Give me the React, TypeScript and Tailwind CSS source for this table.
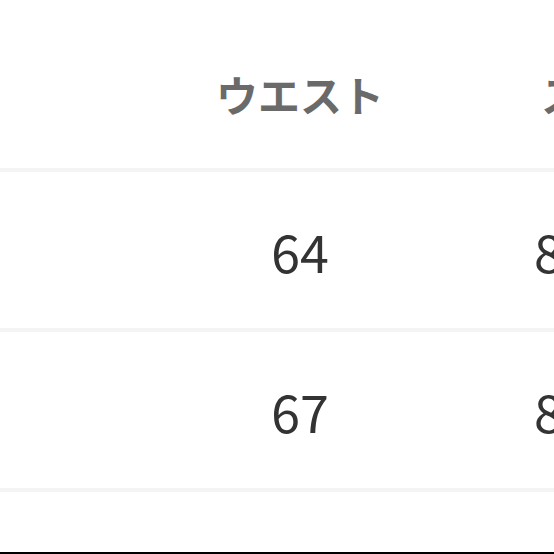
const ROWS = [
  { waist: '64', next: '82' },
  { waist: '67', next: '85' },
];

export default function App() {
  return (
    <div className="flex h-[554px] w-[554px] flex-col overflow-hidden bg-white font-['Noto_Sans_CJK_JP',sans-serif]">
      {/* header row */}
      <div className="grid h-[168px] shrink-0 grid-cols-[168px_264px_1fr] items-center pt-[20px]">
        <div />
        <div className="text-center text-[42px] font-bold leading-none text-[#6a6a6a]">ウエスト</div>
        <div className="whitespace-nowrap pl-[109px] text-[42px] font-bold leading-none text-[#6a6a6a]">スカート丈</div>
      </div>
      <div className="h-[4px] shrink-0 bg-[#f4f4f4]" />

      {ROWS.map((row) => (
        <div key={row.waist} className="flex shrink-0 flex-col">
          <div className="grid h-[156px] grid-cols-[168px_264px_1fr] items-center pt-[2px]">
            <div />
            <div className="text-center text-[52px] leading-none text-[#333333]">{row.waist}</div>
            <div className="whitespace-nowrap pl-[102px] text-[52px] leading-none text-[#333333]">{row.next}</div>
          </div>
          <div className="h-[4px] bg-[#f4f4f4]" />
        </div>
      ))}

      <div className="flex-1 bg-white" />
      <div className="h-[2px] shrink-0 bg-black" />
    </div>
  );
}
